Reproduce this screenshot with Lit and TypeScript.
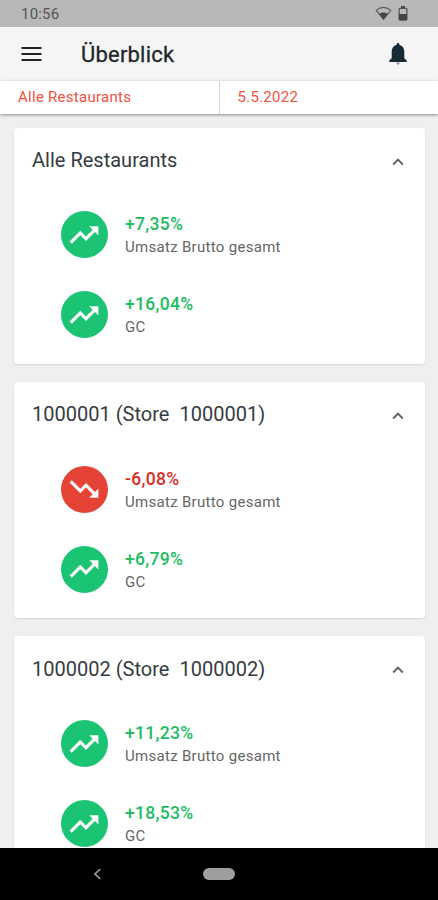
import { LitElement, html, css, svg } from "lit";
import { customElement, property } from "lit/decorators.js";

interface Metric {
  value: string;
  label: string;
  up: boolean;
}

interface Store {
  title: string;
  metrics: Metric[];
}

const stores: Store[] = [
  {
    title: "Alle Restaurants",
    metrics: [
      { value: "+7,35%", label: "Umsatz Brutto gesamt", up: true },
      { value: "+16,04%", label: "GC", up: true },
    ],
  },
  {
    title: "1000001 (Store  1000001)",
    metrics: [
      { value: "-6,08%", label: "Umsatz Brutto gesamt", up: false },
      { value: "+6,79%", label: "GC", up: true },
    ],
  },
  {
    title: "1000002 (Store  1000002)",
    metrics: [
      { value: "+11,23%", label: "Umsatz Brutto gesamt", up: true },
      { value: "+18,53%", label: "GC", up: true },
    ],
  },
];

const trendUp = svg`<path d="M16 6l2.29 2.29-4.88 4.88-4-4L2 16.59 3.41 18l6-6 4 4 6.3-6.29L22 12V6z"/>`;
const trendDown = svg`<path d="M16 18l2.29-2.29-4.88-4.88-4 4L2 7.41 3.41 6l6 6 4-4 6.3 6.29L22 12v6z"/>`;

@customElement("store-card")
class StoreCard extends LitElement {
  @property({ attribute: false }) store!: Store;

  static styles = css`
    :host {
      display: block;
      box-sizing: border-box;
      height: 236px;
      flex: none;
      background: #fff;
      border-radius: 4px;
      box-shadow: 0 1px 2px rgba(0, 0, 0, 0.12);
    }
    .head {
      display: flex;
      align-items: center;
      justify-content: space-between;
      height: 65px;
      padding: 0 16px 0 18px;
    }
    .title {
      font-size: 20px;
      letter-spacing: 0.01px;
      color: #363b41;
      white-space: pre;
    }
    .chevron {
      width: 22px;
      height: 22px;
      margin-top: 3px;
      fill: #606060;
    }
    .metrics {
      display: flex;
      flex-direction: column;
      gap: 33px;
      padding: 18.8px 0 0 46.5px;
    }
    .metric {
      display: flex;
      align-items: center;
      gap: 17.5px;
      height: 47px;
    }
    .disc {
      display: flex;
      align-items: center;
      justify-content: center;
      width: 47px;
      height: 47px;
      border-radius: 50%;
      background: #1bc473;
    }
    .disc.down {
      background: #e54335;
    }
    .disc svg {
      width: 34px;
      height: 34px;
      fill: #fff;
      stroke: #fff;
      stroke-width: 0.3;
    }
    .text {
      padding-top: 3px;
    }
    .value {
      font-size: 17.5px;
      font-weight: 500;
      line-height: 23px;
      letter-spacing: 0.3px;
      color: #1cbd62;
    }
    .value.down {
      color: #dc2b22;
    }
    .label {
      font-size: 15px;
      line-height: 23px;
      letter-spacing: 0.3px;
      color: #666;
    }
  `;

  render() {
    return html`
      <div class="head">
        <div class="title">${this.store.title}</div>
        <svg class="chevron" viewBox="0 0 24 24"><path d="M12 8l-6 6 1.41 1.41L12 10.83l4.59 4.58L18 14z"/></svg>
      </div>
      <div class="metrics">
        ${this.store.metrics.map(
          (m) => html`
            <div class="metric">
              <div class="disc ${m.up ? "" : "down"}">
                <svg viewBox="0 0 24 24">${m.up ? trendUp : trendDown}</svg>
              </div>
              <div class="text">
                <div class="value ${m.up ? "" : "down"}">${m.value}</div>
                <div class="label">${m.label}</div>
              </div>
            </div>
          `
        )}
      </div>
    `;
  }
}

@customElement("app-root")
class AppRoot extends LitElement {
  static styles = css`
    :host {
      display: flex;
      flex-direction: column;
      height: 900px;
      overflow: hidden;
      background: #efefef;
      font-family: Roboto, sans-serif;
    }
    .status {
      display: flex;
      align-items: center;
      justify-content: space-between;
      flex: none;
      height: 27px;
      padding: 0 30px 0 21px;
      background: #b8b8b8;
      color: #555;
    }
    .clock {
      font-size: 15px;
      letter-spacing: 0.2px;
      padding-top: 1px;
    }
    .indicators {
      display: flex;
      align-items: center;
      gap: 6px;
    }
    .indicators svg {
      display: block;
    }
    .bar {
      display: flex;
      align-items: center;
      flex: none;
      height: 54px;
      padding: 0 31px 0 21px;
      background: #f5f5f5;
    }
    .heading {
      flex: 1;
      margin-left: 39px;
      padding-top: 1px;
      font-size: 22px;
      letter-spacing: 0.2px;
      -webkit-text-stroke: 0.3px #22262a;
      color: #22262a;
    }
    .menu,
    .bell {
      display: block;
    }
    .filters {
      display: flex;
      flex: none;
      height: 33px;
      background: #fff;
      box-shadow: 0 1px 3px rgba(0, 0, 0, 0.42);
      z-index: 1;
    }
    .filter {
      flex: 1;
      box-sizing: border-box;
      padding-left: 18px;
      font-size: 15px;
      line-height: 33px;
      letter-spacing: 0.27px;
      color: #f4503f;
    }
    .filter + .filter {
      border-left: 1px solid #d4d4d4;
    }
    .list {
      flex: 1;
      min-height: 0;
      overflow: hidden;
      display: flex;
      flex-direction: column;
      gap: 18.4px;
      padding: 13.5px 13.5px 0 14px;
    }
    .nav {
      display: grid;
      grid-template-columns: 1fr auto 1fr;
      align-items: center;
      flex: none;
      height: 52px;
      background: #000;
    }
    .back {
      display: block;
      margin-left: 93px;
    }
    .pill {
      width: 32px;
      height: 12px;
      border-radius: 6px;
      background: #9e9e9e;
    }
  `;

  render() {
    return html`
      <div class="status">
        <div class="clock">10:56</div>
        <div class="indicators">
          <svg width="17" height="15" viewBox="0 0 17 15">
            <path d="M1.2 4.4Q8.500-1.600 15.800 4.400L8.500 13.400Z" fill="none" stroke="#5a5a5a" stroke-width="1.200" />
            <path d="M4.200 7.800Q8.500 5.200 12.800 7.800L8.500 13.600Z" fill="#444" />
          </svg>
          <svg width="10" height="15" viewBox="0 0 10 15">
            <path d="M3 0h4v2H3z" fill="#484848" />
            <rect x="1.100" y="2.300" width="7.800" height="11.800" rx="1" fill="none" stroke="#555" stroke-width="1.300" />
            <path d="M1 8h8v6H1z" fill="#444" />
          </svg>
        </div>
      </div>
      <div class="bar">
        <svg class="menu" width="21" height="14" viewBox="0 0 21 14">
          <path d="M.5 1h20M.5 7h20M.5 13h20" stroke="#202428" stroke-width="1.9" />
        </svg>
        <div class="heading">Überblick</div>
        <svg class="bell" width="18" height="22" viewBox="0 0 18 22">
          <path d="M9 0c.8 0 1.400.600 1.400 1.400v.500c3.100.700 4.900 3.200 4.900 6.400v7l2.400 2.200v1.500H.3v-1.500l2.400-2.200v-7c0-3.200 1.800-5.700 4.900-6.400v-.500C7.600.6 8.200 0 9 0z" fill="#172b34" />
          <path d="M7.400 19.600h3.200c0 1.200-.7 2.200-1.600 2.200s-1.600-1-1.600-2.200z" fill="#8a9094" />
        </svg>
      </div>
      <div class="filters">
        <div class="filter">Alle Restaurants</div>
        <div class="filter">5.5.2022</div>
      </div>
      <div class="list">
        ${stores.map((s) => html`<store-card .store=${s}></store-card>`)}
      </div>
      <div class="nav">
        <svg class="back" width="9" height="12" viewBox="0 0 9 12">
          <path d="M7.3 1L2 6l5.3 5" fill="none" stroke="#9e9e9e" stroke-width="1.7" />
        </svg>
        <div class="pill"></div>
      </div>
    `;
  }
}
